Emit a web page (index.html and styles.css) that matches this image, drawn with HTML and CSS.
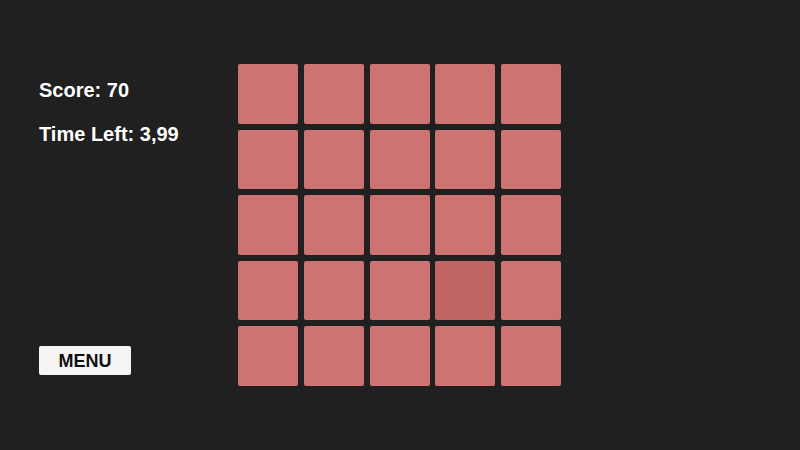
FILE: index.html
```html
<!DOCTYPE html>
<html>
<head>
<meta charset="utf-8">
<link rel="stylesheet" href="styles.css">
</head>
<body>
<div class="screen">
  <div class="side">
    <div class="stat">Score: 70</div>
    <div class="stat second">Time Left: 3,99</div>
    <button class="menu">MENU</button>
  </div>
  <div class="board">
    <div class="tile"></div><div class="tile"></div><div class="tile"></div><div class="tile"></div><div class="tile"></div>
    <div class="tile"></div><div class="tile"></div><div class="tile"></div><div class="tile"></div><div class="tile"></div>
    <div class="tile"></div><div class="tile"></div><div class="tile"></div><div class="tile"></div><div class="tile"></div>
    <div class="tile"></div><div class="tile"></div><div class="tile"></div><div class="tile dark"></div><div class="tile"></div>
    <div class="tile"></div><div class="tile"></div><div class="tile"></div><div class="tile"></div><div class="tile"></div>
  </div>
</div>
</body>
</html>
```
FILE: styles.css
```css
html, body {
  margin: 0;
  padding: 0;
  background: #202020;
}
.screen {
  width: 800px;
  height: 450px;
  display: flex;
  font-family: "Liberation Sans", Arial, sans-serif;
}
.side {
  width: 199px;
  padding: 79px 0 75px 39px;
  display: flex;
  flex-direction: column;
  align-items: flex-start;
}
.stat {
  color: #ffffff;
  font-weight: bold;
  font-size: 20px;
  line-height: 23px;
}
.second {
  margin-top: 21px;
}
.menu {
  margin-top: auto;
  width: 92px;
  height: 29px;
  border: none;
  border-radius: 2px;
  background: #f5f5f5;
  color: #111111;
  font-family: "Liberation Sans", Arial, sans-serif;
  font-weight: bold;
  font-size: 18px;
  padding: 1px 0 0 0;
}
.board {
  margin-top: 64px;
  width: 323px;
  height: 322px;
  display: grid;
  grid-template-columns: repeat(5, 1fr);
  grid-template-rows: repeat(5, 1fr);
  gap: 5.7px 5.75px;
}
.tile {
  background: #cd7473;
  border-radius: 2px;
}
.tile.dark {
  background: #c06464;
}
```
